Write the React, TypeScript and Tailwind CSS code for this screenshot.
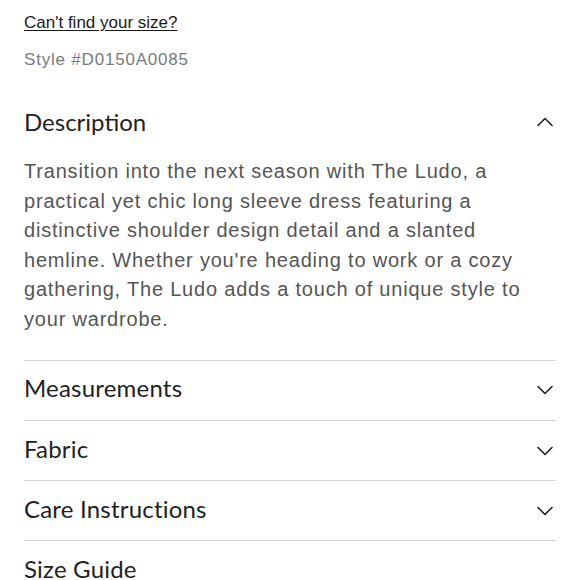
import { ChevronDown, ChevronUp } from 'lucide-react'

const sections = ['Measurements', 'Fabric', 'Care Instructions']

export default function App() {
  return (
    <div className="h-[580px] w-[580px] overflow-hidden bg-white px-6 font-['Lato',sans-serif] text-[#222]">
      <a href="#" className="block pt-[11px] text-[17px] leading-6 underline underline-offset-2 font-['Liberation_Sans',sans-serif] text-[#1a1a1a]">
        Can't find your size?
      </a>
      <p className="mt-[13px] text-[17px] leading-6 tracking-[0.8px] text-[#7a7a7a] font-['Liberation_Sans',sans-serif]">Style #D0150A0085</p>

      <div className="mt-[35px] flex items-center justify-between">
        <h2 className="text-[24px] leading-[30px]">Description</h2>
        <ChevronUp className="-mr-[3px] h-7 w-7" strokeWidth={1.4} />
      </div>
      <p className="mt-[20px] text-[20px] leading-[29.6px] tracking-[0.8px] text-[#555] font-['Liberation_Sans',sans-serif]">
        Transition into the next season with The Ludo, a practical yet chic long sleeve dress featuring a distinctive shoulder design detail and a slanted hemline. Whether you're heading to work or a cozy gathering, The Ludo adds a touch of unique style to your wardrobe.
      </p>

      <div className="mt-[25px]">
        {sections.map(s => (
          <div key={s} className="flex h-[60.3px] items-center justify-between border-t border-[#d6d6d6]">
            <span className="-mt-[4px] text-[24px] tracking-[0.2px]">{s}</span>
            <ChevronDown className="-mr-[3px] h-7 w-7" strokeWidth={1.4} />
          </div>
        ))}
        <div className="flex h-[60.3px] items-center border-t border-[#d6d6d6]">
          <span className="-mt-[4px] text-[24px] tracking-[0.2px]">Size Guide</span>
        </div>
      </div>
    </div>
  )
}
